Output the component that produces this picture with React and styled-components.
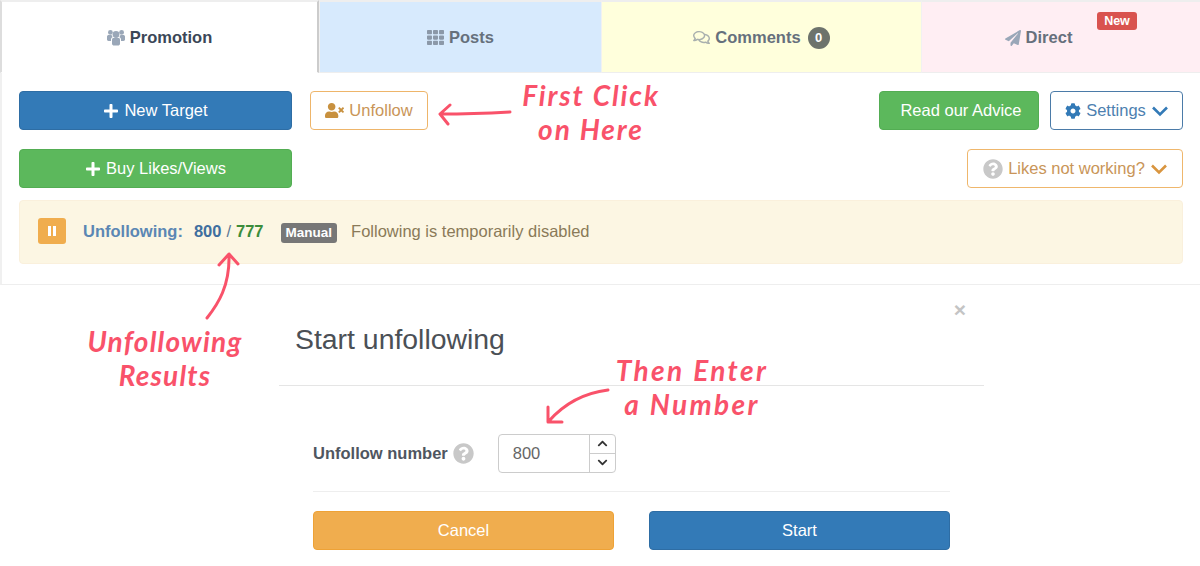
import React from "react";
import styled, { createGlobalStyle } from "styled-components";
import {
  FaTh,
  FaRegComments,
  FaPaperPlane,
  FaPlus,
  FaUserTimes,
  FaCog,
  FaQuestionCircle,
  FaChevronUp,
  FaChevronDown
} from "react-icons/fa";

const GlobalStyle = createGlobalStyle`
  html, body {
    margin: 0;
    padding: 0;
    background: #fff;
  }
  * {
    box-sizing: border-box;
  }
`;

const Page = styled.div`
  position: relative;
  width: 1200px;
  height: 566px;
  overflow: hidden;
  background: #fff;
  font-family: "Liberation Sans", Arial, sans-serif;
  font-size: 16.5px;
  color: #555;
`;

const Tabs = styled.div`
  display: grid;
  grid-template-columns: 319px 282px 320px 279px;
  height: 73px;
`;

const Tab = styled.div`
  position: relative;
  display: flex;
  align-items: center;
  justify-content: center;
  gap: 5px;
  padding: 1px ${p => p.$pr || "0"} 0 0;
  background: ${p => p.$bg};
  border-top: 2px solid #eee;
  border-bottom: 1px solid ${p => (p.$active ? "#fff" : "#eee")};
  border-left: ${p => (p.$active ? "2px solid #ddd" : "1px solid #f1f1f1")};
  border-right: ${p => (p.$active ? "2px solid #ccc" : "none")};
  color: ${p => (p.$active ? "#3b4757" : "#66707c")};
  font-weight: bold;
  svg {
    flex: none;
    color: ${p => p.$iconColor || "#9aa7b8"};
  }
`;

const Count = styled.span`
  display: inline-flex;
  align-items: center;
  justify-content: center;
  width: 22px;
  height: 22px;
  margin-left: 2px;
  border-radius: 50%;
  background: #6d736c;
  color: #fff;
  font-size: 13px;
`;

const NewLabel = styled.span`
  position: absolute;
  top: 10px;
  left: 175px;
  width: 40px;
  border-radius: 3px;
  background: #d9534f;
  color: #fff;
  font-size: 12.5px;
  font-weight: bold;
  line-height: 18px;
  text-align: center;
`;

const Panel = styled.div`
  height: 212px;
  padding: 18px 17px 0;
  border-left: 2px solid #f0f0f0;
  border-bottom: 1px solid #eeeeee;
`;

const Row = styled.div`
  display: flex;
  align-items: center;
  justify-content: space-between;
  margin-bottom: ${p => p.$mb || "0"};
`;

const Group = styled.div`
  display: flex;
  gap: ${p => p.$gap};
`;

const Button = styled.button`
  display: inline-flex;
  align-items: center;
  justify-content: center;
  gap: 5px;
  width: ${p => p.$w};
  height: 39px;
  padding: 0 0 0 ${p => p.$pl || "0"};
  border: 1px solid ${p => p.$border || p.$bg};
  border-radius: 4px;
  background: ${p => p.$bg || "#fff"};
  color: ${p => p.$color || "#fff"};
  font-family: inherit;
  font-size: 16.5px;
  svg {
    flex: none;
  }
`;

const Alert = styled.div`
  display: flex;
  align-items: center;
  height: 64px;
  margin-top: 12px;
  padding: 0 0 2px 18px;
  border: 1px solid #faf0dc;
  border-radius: 4px;
  background: #fcf6e3;
  color: #8a7a58;
`;

const PauseBox = styled.div`
  display: flex;
  align-items: center;
  justify-content: center;
  gap: 2px;
  width: 28px;
  height: 26px;
  border-radius: 3px;
  background: #f0ad4e;
`;

const PauseBar = styled.span`
  width: 3px;
  height: 10px;
  background: #fff;
`;

const AlertTitle = styled.b`
  margin-left: 17px;
  color: #5b87b4;
`;

const Stat = styled.b`
  color: ${p => p.$color};
`;

const Slash = styled.span`
  margin: 0 5px;
  color: #5b7896;
`;

const Stats = styled.span`
  margin-left: 11px;
`;

const Tag = styled.span`
  margin: 3px 14px 0 17px;
  padding: 3px 5px;
  border-radius: 3px;
  background: #777;
  color: #fff;
  font-size: 13.5px;
  font-weight: bold;
  line-height: 14px;
`;

const Modal = styled.div`
  width: 705px;
  margin-left: 279px;
`;

const ModalHeader = styled.div`
  position: relative;
  height: 101px;
  padding: 38px 0 0 16px;
  border-bottom: 1px solid #e5e5e5;
  font-size: 28.4px;
  line-height: 32px;
  color: #4b5056;
`;

const Close = styled.span`
  position: absolute;
  top: 14px;
  right: 18px;
  color: #c4c4c4;
  font-size: 21px;
  font-weight: bold;
  line-height: 22px;
`;

const ModalBody = styled.div`
  padding: 48px 34px 0;
`;

const FormRow = styled.div`
  display: flex;
  align-items: center;
  height: 58px;
  padding-bottom: 19px;
  border-bottom: 1px solid #eee;
`;

const Label = styled.b`
  color: #4f5660;
`;

const Help = styled(FaQuestionCircle)`
  margin: 0 24px 0 5px;
  color: #c8c8c8;
  font-size: 21px;
`;

const Spin = styled.div`
  display: flex;
  width: 118px;
  height: 39px;
  border: 1px solid #ccc;
  border-radius: 4px;
  overflow: hidden;
`;

const SpinValue = styled.div`
  flex: 1;
  padding: 9px 0 0 14px;
  color: #666;
  line-height: 18px;
`;

const SpinButtons = styled.div`
  display: flex;
  flex-direction: column;
  width: 26px;
  border-left: 1px solid #ccc;
`;

const SpinButton = styled.div`
  flex: 1;
  display: flex;
  align-items: center;
  justify-content: center;
  color: #333;
  font-size: 11px;
  & + & {
    border-top: 1px solid #ccc;
  }
`;

const Actions = styled.div`
  display: flex;
  justify-content: space-between;
  margin-top: 19px;
  width: 637px;
`;

const Note = styled.div`
  position: absolute;
  top: ${p => p.$top}px;
  left: ${p => p.$left}px;
  width: ${p => p.$w}px;
  color: #f9526a;
  font-family: "Lato", "Liberation Sans", sans-serif;
  font-style: italic;
  font-weight: 700;
  font-size: 28px;
  line-height: 34px;
  text-align: center;
  letter-spacing: ${p => p.$ls}px;
`;

const Arrow = styled.svg`
  position: absolute;
  top: ${p => p.$top}px;
  left: ${p => p.$left}px;
  fill: none;
  stroke: #f9526a;
  stroke-width: 3;
  stroke-linecap: round;
  stroke-linejoin: round;
`;

const UsersIcon = () => (
  <svg width="18" height="17" viewBox="0 0 18 17" fill="currentColor">
    <circle cx="9" cy="5.5" r="3.4" />
    <circle cx="3.4" cy="3.4" r="2.4" />
    <circle cx="14.6" cy="3.4" r="2.4" />
    <path d="M5 10.5 C5 9.4 6 9 7 9 H11 C12 9 13 9.4 13 10.5 V14.5 C13 16 12 16.5 11 16.5 H7 C6 16.5 5 16 5 14.5 Z" />
    <path d="M0 7.5 C0 6.6 .8 6 1.6 6 H4.6 C4.8 7 5.2 7.6 5.8 8.1 C4.6 8.5 4 9.4 4 10.6 V12 H1.5 C.6 12 0 11.5 0 10.6 Z" />
    <path d="M18 7.5 C18 6.6 17.2 6 16.4 6 H13.4 C13.2 7 12.8 7.6 12.2 8.1 C13.4 8.5 14 9.4 14 10.6 V12 H16.5 C17.4 12 18 11.5 18 10.6 Z" />
  </svg>
);

const AngleDown = ({ color }) => (
  <svg width="18" height="12" viewBox="0 0 18 12" fill="none" stroke={color} strokeWidth="2.6">
    <path d="M2 2.5 L9 9.5 L16 2.5" />
  </svg>
);

export default function App() {
  return (
    <Page>
      <GlobalStyle />
      <Tabs>
        <Tab $active $bg="#fff">
          <UsersIcon />
          Promotion
        </Tab>
        <Tab $bg="#d7eafd" $iconColor="#8b98a8">
          <FaTh size={17} />
          Posts
        </Tab>
        <Tab $bg="#ffffdc" $iconColor="#a9b0ae">
          <FaRegComments size={17} />
          Comments
          <Count>0</Count>
        </Tab>
        <Tab $bg="#ffeef3" $iconColor="#9aa7b8" $pr="45px">
          <FaPaperPlane size={16} />
          Direct
          <NewLabel>New</NewLabel>
        </Tab>
      </Tabs>

      <Panel>
        <Row $mb="19px">
          <Group $gap="18px">
            <Button $w="273px" $bg="#337ab7" $border="#2e6da4">
              <FaPlus size={16} />
              New Target
            </Button>
            <Button $w="118px" $border="#eeb56a" $color="#c99558">
              <FaUserTimes size={19} color="#c8913f" />
              Unfollow
            </Button>
          </Group>
          <Group $gap="11px">
            <Button $w="160px" $bg="#5cb85c" $border="#53ad53" $pl="4px">
              Read our Advice
            </Button>
            <Button $w="133px" $border="#4b7ba8" $color="#4d7fb0" $pl="1px">
              <FaCog size={16} color="#337ab7" />
              Settings
              <AngleDown color="#337ab7" />
            </Button>
          </Group>
        </Row>
        <Row>
          <Button $w="273px" $bg="#5cb85c" $border="#53ad53">
            <FaPlus size={16} />
            Buy Likes/Views
          </Button>
          <Button $w="216px" $border="#efb76c" $color="#c99558" $pl="1px">
            <FaQuestionCircle color="#c8c8c8" size={20} />
            Likes not working?
            <AngleDown color="#d9953f" />
          </Button>
        </Row>
        <Alert>
          <PauseBox>
            <PauseBar />
            <PauseBar />
          </PauseBox>
          <AlertTitle>Unfollowing:</AlertTitle>
          <Stats>
            <Stat $color="#3f6f9f">800</Stat>
            <Slash>/</Slash>
            <Stat $color="#3c8d3c">777</Stat>
          </Stats>
          <Tag>Manual</Tag>
          Following is temporarily disabled
        </Alert>
      </Panel>

      <Modal>
        <ModalHeader>
          Start unfollowing
          <Close>×</Close>
        </ModalHeader>
        <ModalBody>
          <FormRow>
            <Label>Unfollow number</Label>
            <Help />
            <Spin>
              <SpinValue>800</SpinValue>
              <SpinButtons>
                <SpinButton>
                  <FaChevronUp />
                </SpinButton>
                <SpinButton>
                  <FaChevronDown />
                </SpinButton>
              </SpinButtons>
            </Spin>
          </FormRow>
          <Actions>
            <Button $w="301px" $bg="#f0ad4e" $border="#eea236">
              Cancel
            </Button>
            <Button $w="301px" $bg="#337ab7" $border="#2e6da4">
              Start
            </Button>
          </Actions>
        </ModalBody>
      </Modal>

      <Note $top={78} $left={491} $w={200} $ls={1.9}>
        First Click
        <br />
        on Here
      </Note>
      <Arrow $top={100} $left={436} width="80" height="30" viewBox="0 0 80 30">
        <path d="M74 12 C55 13 30 14 5 14 M14 5 L4 14 L12 24" />
      </Arrow>

      <Note $top={324} $left={65} $w={200} $ls={1.2}>
        Unfollowing
        <br />
        Results
      </Note>
      <Arrow $top={248} $left={200} width="50" height="76" viewBox="0 0 50 76">
        <path d="M7 70 C18 56 30 38 29 6 M19 17 L29 6 L38 16" />
      </Arrow>

      <Note $top={353} $left={592} $w={200} $ls={2.4}>
        Then Enter
        <br />
        a Number
      </Note>
      <Arrow $top={384} $left={540} width="76" height="44" viewBox="0 0 76 44">
        <path d="M68 6 C44 9 24 20 9 37 M8 23 L8 38 L22 38" />
      </Arrow>
    </Page>
  );
}
